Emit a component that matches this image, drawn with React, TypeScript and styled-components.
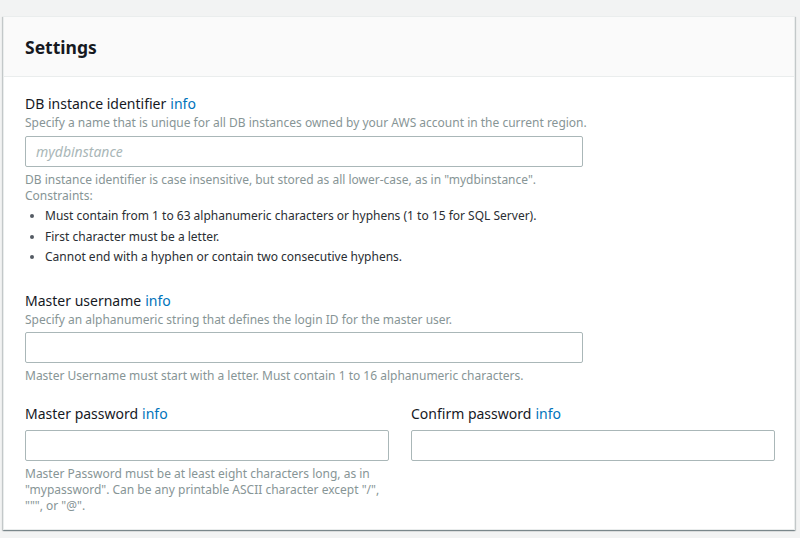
import React from "react";
import styled, { createGlobalStyle } from "styled-components";

const Global = createGlobalStyle`
  html, body { margin: 0; padding: 0; background: #f2f3f3; }
  body { font-family: "Noto Sans", "Open Sans", sans-serif; color: #16191f; }
  * { box-sizing: border-box; }
`;

const Page = styled.div`
  padding: 16px 5px 6px 3px;
  min-height: 538px;
`;

const Card = styled.section`
  background: #fff;
  border: 1px solid #eaeded;
  box-shadow: 0 1px 1px 0 rgba(0, 28, 36, 0.3), 1px 1px 1px 0 rgba(0, 28, 36, 0.15), -1px 1px 1px 0 rgba(0, 28, 36, 0.15);
`;

const Header = styled.header`
  background: #fafafa;
  border-bottom: 1px solid #eaeded;
  height: 60px;
  padding: 0 21px;
  display: flex;
  align-items: center;
`;

const Title = styled.h2`
  margin: 0;
  font-size: 17.5px;
  font-weight: 700;
  color: #16191f;
`;

const Body = styled.div`
  padding: 17px 19px 15px 21px;
  display: flex;
  flex-direction: column;
  gap: 20px;
`;

const Field = styled.div`
  display: flex;
  flex-direction: column;
`;

const Row = styled.div`
  display: grid;
  grid-template-columns: 1fr 1fr;
  column-gap: 22px;
`;

const Label = styled.label`
  font-size: 14px;
  line-height: 20px;
  color: #16191f;
`;

const Info = styled.a`
  color: #0073bb;
  text-decoration: none;
  margin-left: 4px;
`;

const Desc = styled.div`
  font-size: 12px;
  line-height: 18px;
  color: #879596;
`;

const Input = styled.input<{ $w?: number; $mt: number }>`
  width: ${(p) => (p.$w ? `${p.$w}px` : "100%")};
  height: 31px;
  margin: ${(p) => p.$mt}px 0 5px;
  border: 1px solid #aab7b8;
  border-radius: 2px;
  padding: 0 10px;
  font-family: inherit;
  font-size: 14px;
  &::placeholder { color: #aab7b8; font-style: italic; }
`;

const Help = styled.div<{ $mt?: number }>`
  margin-top: ${(p) => p.$mt ?? 0}px;
  font-size: 12px;
  line-height: 16px;
  color: #879596;
`;

const List = styled.ul`
  margin: 2px 0 0;
  padding: 0 0 3px 20px;
  font-size: 12px;
  line-height: 20.5px;
  color: #2a2e33;
  li::marker { color: #545b64; }
`;

export default function App() {
  return (
    <>
      <Global />
      <Page>
        <Card>
          <Header>
            <Title>Settings</Title>
          </Header>
          <Body>
            <Field>
              <Label>
                DB instance identifier<Info href="#">info</Info>
              </Label>
              <Desc>Specify a name that is unique for all DB instances owned by your AWS account in the current region.</Desc>
              <Input $w={558} $mt={4} placeholder="mydbinstance" />
              <Help>
                DB instance identifier is case insensitive, but stored as all lower-case, as in "mydbinstance".
                <br />
                Constraints:
              </Help>
              <List>
                <li>Must contain from 1 to 63 alphanumeric characters or hyphens (1 to 15 for SQL Server).</li>
                <li>First character must be a letter.</li>
                <li>Cannot end with a hyphen or contain two consecutive hyphens.</li>
              </List>
            </Field>
            <Field>
              <Label>
                Master username<Info href="#">info</Info>
              </Label>
              <Desc>Specify an alphanumeric string that defines the login ID for the master user.</Desc>
              <Input $w={558} $mt={3} />
              <Help>Master Username must start with a letter. Must contain 1 to 16 alphanumeric characters.</Help>
            </Field>
            <Row>
              <Field>
                <Label>
                  Master password<Info href="#">info</Info>
                </Label>
                <Input type="password" $mt={6} />
                <Help>
                  Master Password must be at least eight characters long, as in "mypassword". Can be any printable ASCII character except "/", """, or "@".
                </Help>
              </Field>
              <Field>
                <Label>
                  Confirm password<Info href="#">info</Info>
                </Label>
                <Input type="password" $mt={6} />
              </Field>
            </Row>
          </Body>
        </Card>
      </Page>
    </>
  );
}
